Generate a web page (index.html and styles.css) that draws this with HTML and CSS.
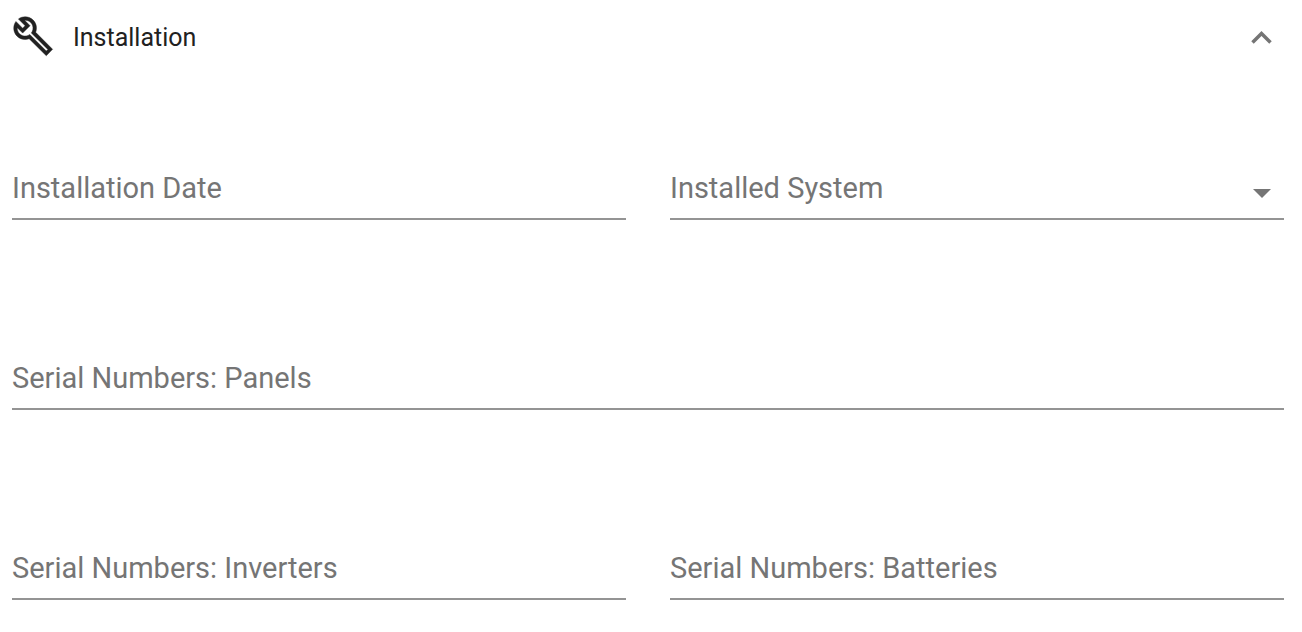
FILE: index.html
```html
<!DOCTYPE html>
<html lang="en">
<head>
  <meta charset="UTF-8" />
  <meta name="viewport" content="width=device-width, initial-scale=1.0" />
  <title>Installation</title>
  <link rel="stylesheet" href="styles.css">
</head>
<body>

  <section class="panel">
    <!-- Panel Header -->
    <button type="button" class="panel-header" aria-expanded="true" aria-controls="installationForm">
      <svg class="panel-icon" viewBox="0 0 24 24" aria-hidden="true">
        <path d="M22.61 18.99l-9.08-9.08c.93-2.34.45-5.1-1.44-7C9.79.61 6.21.4 3.66 2.26L7.5 6.11 6.08 7.52 2.25 3.69C.39 6.23.6 9.82 2.9 12.11c1.86 1.86 4.57 2.35 6.89 1.48l9.8 9.7L23.2 19.6zm-3 1.6l-9.46-9.46c-.61.45-1.29.72-2 .82-1.36.2-2.79-.21-3.83-1.25C3.37 9.76 2.93 8.5 3 7.26l3.09 3.09 4.24-4.24-3.09-3.09c1.24-.07 2.49.37 3.44 1.31 1.08 1.08 1.49 2.57 1.24 3.96-.12.71-.42 1.37-.88 1.96l9.45 9.45-.88.89z" />
      </svg>
      <span class="panel-title">Installation</span>
      <svg class="panel-arrow" viewBox="0 0 24 16" aria-hidden="true">
        <path d="M3.5 12.5l9-9 9 9" />
      </svg>
    </button>

    <!-- Installation Form -->
    <form id="installationForm" class="form-grid">
      <div class="field">
        <input type="text" id="installationDate" class="field-input" />
        <label for="installationDate" class="field-label">Installation Date</label>
      </div>
      <div class="field">
        <select id="installedSystem" class="field-input">
          <option value=""></option>
        </select>
        <label for="installedSystem" class="field-label">Installed System</label>
        <svg class="field-arrow" viewBox="0 0 18 9" aria-hidden="true">
          <path d="M0 0h18L9 9z" />
        </svg>
      </div>
      <div class="field field-wide">
        <input type="text" id="serialPanels" class="field-input" />
        <label for="serialPanels" class="field-label">Serial Numbers: Panels</label>
      </div>
      <div class="field">
        <input type="text" id="serialInverters" class="field-input" />
        <label for="serialInverters" class="field-label">Serial Numbers: Inverters</label>
      </div>
      <div class="field">
        <input type="text" id="serialBatteries" class="field-input" />
        <label for="serialBatteries" class="field-label">Serial Numbers: Batteries</label>
      </div>
    </form>
  </section>

</body>
</html>
```
FILE: styles.css
```css
/* Reset & Base */
* {
  margin: 0;
  padding: 0;
  box-sizing: border-box;
}
body {
  font-family: Roboto, sans-serif;
  background: #fff;
  color: #212121;
}

/* Panel Header */
.panel {
  padding: 15px 18px 32px 12px;
}
.panel-header {
  display: flex;
  align-items: center;
  width: 100%;
  height: 46px;
  padding-right: 11px;
  border: none;
  background: none;
  color: inherit;
  font-family: inherit;
  font-size: 25px;
  line-height: 32px;
  text-align: left;
  cursor: pointer;
}
.panel-icon {
  align-self: flex-start;
  width: 42px;
  height: 42px;
  margin-right: 19px;
  fill: currentColor;
  stroke: currentColor;
  stroke-width: 0.25;
}
.panel-title {
  flex: 1;
}
.panel-arrow {
  width: 24px;
  height: 16px;
  fill: none;
  stroke: #757575;
  stroke-width: 3.5;
}

/* Form */
.form-grid {
  display: grid;
  grid-template-columns: 1fr 1fr;
  gap: 130px 44px;
  padding-top: 99px;
}
.field {
  position: relative;
}
.field-wide {
  grid-column: 1 / -1;
}
.field-input {
  display: block;
  width: 100%;
  height: 60px;
  border: none;
  border-bottom: 2px solid #949494;
  border-radius: 0;
  background: none;
  appearance: none;
  color: inherit;
  font-family: inherit;
  font-size: 29px;
  outline: none;
}
.field-input:focus {
  border-color: #212121;
}
.field-label {
  position: absolute;
  left: 0;
  bottom: 14px;
  color: #757575;
  font-size: 29px;
  line-height: 36px;
  pointer-events: none;
}
.field-arrow {
  position: absolute;
  right: 13px;
  bottom: 22px;
  width: 18px;
  height: 9px;
  fill: #757575;
  pointer-events: none;
}
```
